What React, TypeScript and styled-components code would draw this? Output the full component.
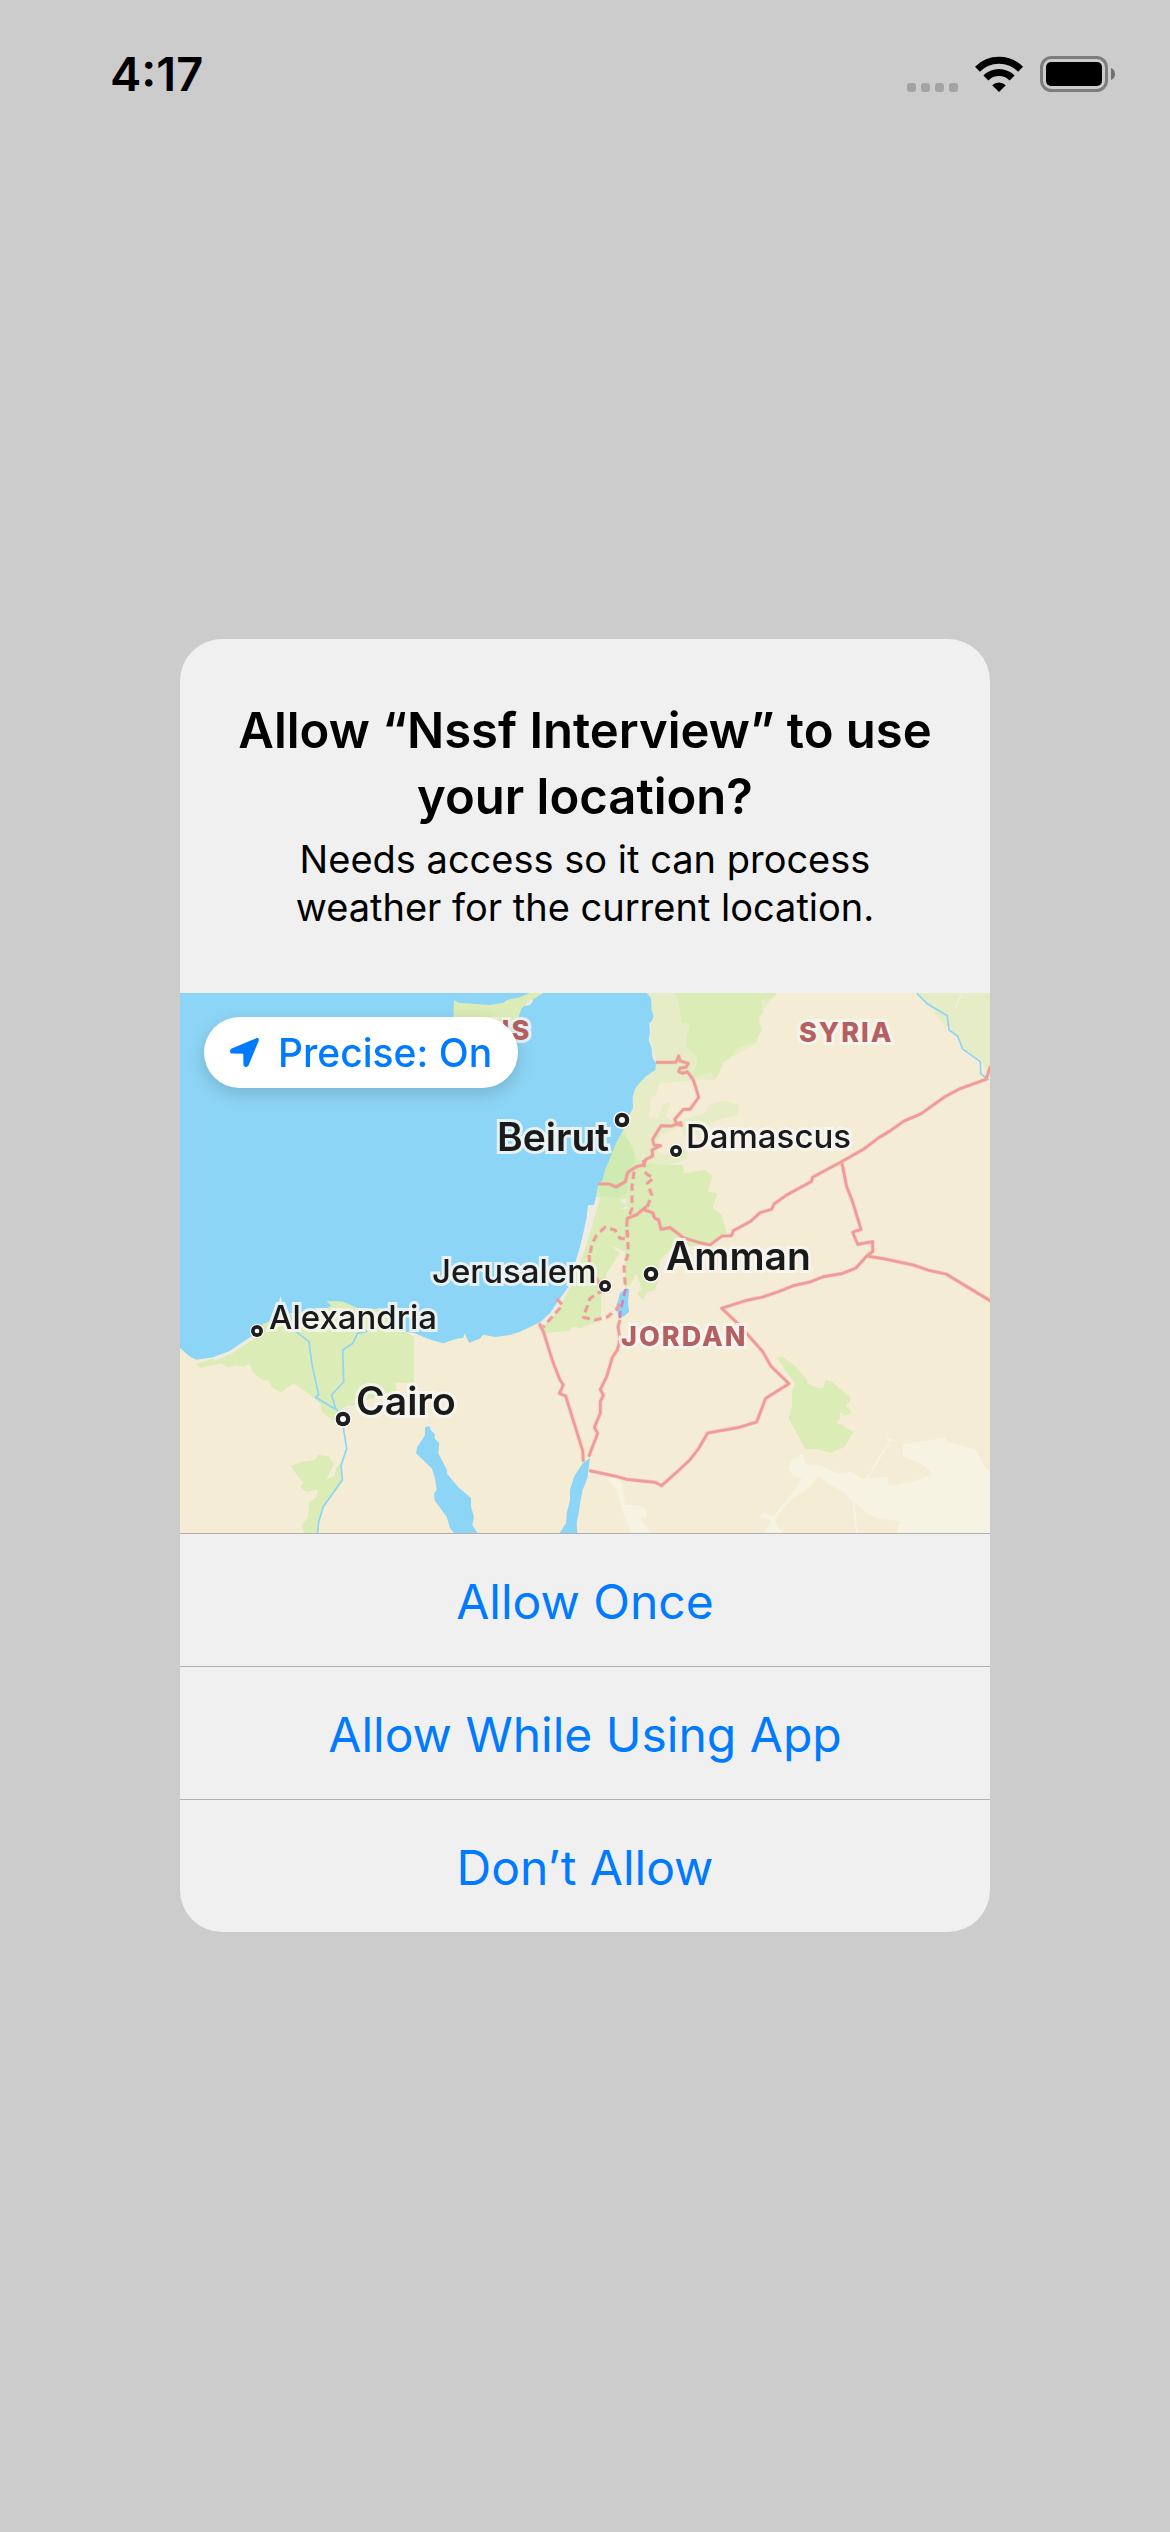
import React from "react";
import styled, { createGlobalStyle } from "styled-components";

const GlobalStyle = createGlobalStyle`
  *, *::before, *::after { box-sizing: border-box; }
  body {
    margin: 0;
    background: #cccccc;
    font-family: Inter, "Liberation Sans", sans-serif;
    color: #000000;
  }
`;

const Screen = styled.div`
  display: flex;
  flex-direction: column;
  min-height: 100vh;
  padding-bottom: 102px;
  background: #cccccc;
`;

const StatusBar = styled.header`
  display: flex;
  align-items: center;
  justify-content: space-between;
  height: 141px;
  padding: 6px 55px 0 110px;
`;

const Clock = styled.time`
  font-size: 47px;
  font-weight: 600;
  line-height: 54px;
`;

const StatusIcons = styled.div`
  display: flex;
  align-items: flex-end;
  gap: 17px;
`;

const Content = styled.main`
  display: flex;
  flex: 1;
  align-items: center;
  justify-content: center;
`;

const Dialog = styled.section`
  width: 100%;
  max-width: 810px;
  overflow: hidden;
  border-radius: 42px;
  background: #f0f0f0;
`;

const Heading = styled.div`
  padding: 59px 48px 62px;
  text-align: center;
`;

const Title = styled.h1`
  margin: 0 0 5px;
  font-size: 49px;
  font-weight: 600;
  line-height: 66px;
`;

const Message = styled.p`
  max-width: 640px;
  margin: 0 auto;
  font-size: 38px;
  line-height: 48px;
`;

const MapFrame = styled.div`
  position: relative;
  aspect-ratio: 3 / 2;
  overflow: hidden;
  background: #f5ecd5;
`;

const MapArt = styled.svg`
  display: block;
  width: 100%;
  height: 100%;
`;

const Label = styled.span<{ $x: number; $y: number }>`
  position: absolute;
  left: ${(p) => (p.$x / 810) * 100}%;
  top: ${(p) => (p.$y / 540) * 100}%;
  line-height: 40px;
  white-space: nowrap;
  color: #1a1a1a;
  paint-order: stroke fill;
  -webkit-text-stroke: 6px rgba(246, 246, 242, 0.85);
`;

const Capital = styled(Label)`
  font-size: 39px;
  font-weight: 600;
`;

const City = styled(Label)`
  font-size: 33px;
  font-weight: 500;
`;

const Country = styled(Label)`
  font-size: 27px;
  font-weight: 800;
  letter-spacing: 2px;
  color: #b56060;
`;

const PreciseButton = styled.button`
  position: absolute;
  top: 24px;
  left: 24px;
  display: flex;
  align-items: center;
  gap: 19px;
  height: 71px;
  padding: 0 26px;
  border: 0;
  border-radius: 36px;
  background: #ffffff;
  box-shadow: 0 6px 18px rgba(0, 0, 0, 0.16);
  color: #007aff;
  font: 500 39px/48px Inter, "Liberation Sans", sans-serif;
  white-space: nowrap;
`;

const Actions = styled.div`
  display: flex;
  flex-direction: column;
`;

const Action = styled.button`
  height: 133px;
  padding: 4px 0 0;
  border: 0;
  border-top: 1px solid #b0b0b0;
  background: transparent;
  color: #007aff;
  font: 400 48px/66px Inter, "Liberation Sans", sans-serif;
`;

const SEA = "#8dd5f6";
const SAND = "#f5ecd5";
const GREEN = "#dbecb6";
const PALE_GREEN = "#e6ecc5";
const BEACH = "#efebe3";
const DESERT = "#f6f3e3";
const BORDER = "#f09a9a";

const markers = [
  { x: 442, y: 127, big: true },
  { x: 496, y: 158, big: false },
  { x: 471, y: 281, big: true },
  { x: 425, y: 293, big: false },
  { x: 77, y: 338, big: false },
  { x: 163, y: 426, big: true },
];

function Terrain() {
  return (
    <MapArt viewBox="0 0 2430 1620" preserveAspectRatio="none" aria-hidden="true">
      <rect width="2430" height="1620" fill={SAND} />
      {/* Levant */}
      <g transform="translate(1200 -39)">
        <polygon fill={PALE_GREEN} points="190,30 600,30 545,90 530,190 440,240 400,300 340,300 300,305 240,310 228,345 214,352 205,412 235,415 247,375 268,365 270,378 255,410 290,425 375,400 385,375 430,362 477,375 475,405 410,420 320,480 320,540 240,560 100,610 0,600 0,300" />
        <polygon fill={SAND} points="245,462 300,440 325,500 300,515 245,525 225,500" />
        <polygon fill={GREEN} points="280,30 592,30 585,50 545,60 549,98 533,115 546,150 525,188 475,202 445,238 425,245 420,275 402,300 395,275 355,290 325,300 345,270 353,235 320,200 318,185 330,130 305,128 298,70" />
        <polygon fill={PALE_GREEN} points="1010,30 1230,30 1230,300 1205,240 1150,205 1110,140 1090,135" />
        <polyline fill="none" stroke="#f1efe2" strokeWidth="3" points="1145,39 1126,85" />
      </g>
      <polygon fill={GREEN} points="1330,411 1362,471 1370,501 1440,516 1510,516 1512,541 1575,531 1598,551 1582,596 1612,601 1598,646 1625,666 1640,721 1590,756 1480,761 1440,801 1435,861 1425,891 1402,896 1388,921 1372,901 1385,891 1370,841 1350,876 1335,886 1334,776 1290,755 1320,781 1280,841 1265,901 1263,971 1240,991 1200,1006 1180,1001 1165,1014 1090,1021 1075,1005 1105,976 1155,891 1190,801 1210,731 1240,611 1260,561 1300,451" />
      <polygon fill="#cfebb1" points="1320,411 1345,441 1362,481 1364,506 1350,533 1340,600 1310,615 1262,610 1250,574 1270,521 1295,461" />
      <polygon fill={BEACH} points="1318,620 1340,616 1340,642 1368,646 1318,648 1342,640" />
      <polygon fill={BEACH} points="1435,861 1452,800 1475,781 1460,820" />
      {/* Nile delta and valley */}
      <g transform="translate(-30 801)">
        <polygon fill={GREEN} points="75,312 150,290 200,265 245,235 275,190 360,165 480,110 560,110 640,150 690,205 732,232 732,368 675,368 680,392 650,400 565,430 540,440 510,460 500,490 455,455 450,430 410,397 370,370 335,397 305,382 298,362 275,360 250,338 238,312 220,321 195,316 175,323 155,310 90,323" />
        <polygon fill={BEACH} points="505,452 540,434 552,445 520,470" />
        <polygon fill={BEACH} points="776,500 780,460 786,508" />
        <polygon fill={GREEN} points="360,618 405,603 435,600 445,584 475,588 492,612 468,660 495,645 498,625 512,610 517,660 460,740 446,785 443,820 402,820 396,795 414,770 417,727 440,710 443,688 410,697 390,680 400,670" />
      </g>
      {/* Eastern desert */}
      <g transform="translate(1200 801)">
        <polygon fill={GREEN} points="590,293 608,291 645,317 680,357 682,371 715,384 730,383 736,359 755,365 810,410 810,424 797,437 817,458 793,466 778,455 782,472 769,488 790,497 820,516 793,562 750,579 715,567 676,567 626,475 636,435 636,395 645,371" />
        <polygon fill={DESERT} points="626,625 635,600 668,582 677,611 720,616 770,640 815,636 850,659 866,648 890,600 928,545 917,528 970,552 1095,533 1105,546 1188,570 1218,625 1230,635 1230,820 950,820 960,784 895,776 860,760 825,728 833,820 828,820 817,722 790,695 750,675 715,648 685,685 630,722 585,775 592,800 610,820 552,820 575,780 541,772 548,757 580,770 625,715 655,675 665,655 640,648" />
        <polygon fill={SAND} points="866,655 922,650 925,678 1000,665 1057,643 1035,617 969,588 969,553 935,540 910,580" />
        <polygon fill={DESERT} points="80,655 115,655 128,675 135,735 170,735 198,748 200,768 180,778 215,820 155,820 130,760 110,690" />
      </g>
      {/* Coast */}
      <polyline fill="none" stroke={BEACH} strokeWidth="22" points="1250,611 1230,680 1205,765 1185,815 1160,880 1125,945 1076,1000" />
      <polyline fill="none" stroke={BEACH} strokeWidth="26" points="100,1091 150,1070 190,1042 230,1018" />
      <polyline fill="none" stroke={BEACH} strokeWidth="8" points="1415,80 1408,91 1410,116 1406,141 1414,161 1426,205" />
      <polygon fill={SEA} points="0,0 1400,0 1413,16 1415,51 1421,69 1416,83 1408,91 1410,116 1406,141 1414,161 1418,196 1428,211 1426,231 1396,251 1380,269 1366,286 1358,311 1359,346 1350,361 1330,411 1308,451 1292,491 1275,531 1268,561 1255,574 1248,611 1242,636 1224,637 1220,671 1212,711 1200,761 1185,811 1165,881 1130,931 1110,961 1080,988 1020,1016 990,1026 945,1032 910,1025 900,1037 867,1049 854,1021 850,1034 830,1037 790,1051 755,1041 740,1036 702,1019 650,1014 640,975 600,945 545,955 510,941 480,926 440,924 455,940 430,965 330,960 300,975 248,993 220,1026 190,1046 150,1073 100,1093 50,1100 30,1091 0,1065" />
      <polygon fill={GREEN} points="330,965 420,950 460,938 455,925 490,926 540,948 600,950 625,985 640,1012 450,1014 330,1014" />
      {/* Cyprus */}
      <g transform="translate(-30 -39)">
        <polygon fill={GREEN} points="852,60 865,68 960,75 1000,68 1012,60 1050,52 1085,36 1126,36 1100,52 1078,65 1055,85 1045,112 1000,150 860,150 850,110" />
        <polygon fill={BEACH} points="1068,72 1084,58 1090,62 1080,75 1064,78" />
      </g>
      {/* Inland water */}
      <g transform="translate(-30 801)" fill="none" stroke={SEA} strokeWidth="5">
        <polyline points="518,490 530,565 513,617 517,660 460,740 446,785 443,820" />
        <polyline points="355,155 378,215 417,245 427,320 446,404 437,412 505,453" />
        <polyline points="600,212 563,220 548,250 518,270 521,366 485,404 497,448" />
        <polygon fill={SEA} stroke="none" points="765,502 778,498 782,510 795,523 793,535 808,550 805,580 830,628 832,642 865,682 903,714 903,740 912,770 907,795 923,820 853,820 840,805 830,770 793,720 793,700 800,690 795,655 785,625 738,580 742,560 765,525" />
        <polygon fill={SEA} stroke="none" points="1260,594 1252,655 1238,690 1232,720 1225,765 1220,790 1222,820 1168,820 1188,790 1190,760 1200,720 1200,690 1212,650 1238,610" />
      </g>
      <polyline fill="none" stroke={SEA} strokeWidth="5" points="2210,0 2240,31 2302,68 2307,111 2333,129 2348,168 2401,206 2402,241 2425,261" />
      <polygon fill={SEA} points="1338,886 1348,889 1344,926 1347,956 1332,970 1315,974 1310,936 1320,901" />
      <Borders />
      {markers.map((m) => (
        <g key={`${m.x}-${m.y}`}>
          <circle cx={m.x * 3} cy={m.y * 3} r={m.big ? 26 : 21} fill="#ffffff" />
          <circle cx={m.x * 3} cy={m.y * 3} r={m.big ? 22 : 18} fill="#1f1f1f" />
          <circle cx={m.x * 3} cy={m.y * 3} r={m.big ? 9 : 7} fill="#ffffff" />
        </g>
      ))}
    </MapArt>
  );
}

function BorderLines() {
  return (
    <>
      <g transform="translate(1200 -39)">
        <polyline points="228,247 288,247 296,228 300,243 325,250 318,262 300,264 296,275 308,280 322,275 340,300 348,325 356,352 330,388 310,388 284,418 290,432 304,436 302,428 275,438 243,437 218,478 222,495 242,497 216,510 218,528 198,538 190,555 170,560 150,572 143,578 136,605 108,621 88,612 55,612" />
        <polyline points="140,740 142,715 170,704 198,680 193,690 218,698 224,714 236,720 243,748 270,743 310,773 355,787 390,795 426,768 455,767 460,752 512,724 540,698 575,688 582,672 620,645 695,604 697,592 785,545 850,508 895,474 930,453 972,423 1022,402 1095,350 1140,326 1218,298 1232,258" />
        <polyline points="786,550 800,620 817,663 843,748 818,757 833,793 878,785 878,815 860,828" />
      </g>
      <g transform="translate(1200 801)">
        <polyline points="1232,123 1098,42 1050,32 1000,15 910,-4 860,-12 828,24 785,41 730,50 690,66 640,77 595,95 548,111 500,121 425,145 475,192 548,275 573,319 627,371 557,415 530,486 478,502 383,519 355,567 330,599 295,632 244,677 226,667 140,658 112,650 28,632" />
        <polyline points="120,180 114,200 120,238 112,270 97,292 80,350 61,388 70,406 61,424 61,460 43,502 53,520 26,590" />
      </g>
      <g transform="translate(-30 801)">
        <polyline points="1108,190 1120,215 1150,310 1170,360 1180,375 1168,400 1187,408 1200,450 1238,572 1240,605" />
      </g>
      <g strokeDasharray="22 14">
        <g transform="translate(1140 381)">
          <polyline points="222,155 216,200 216,265 205,295" />
          <polyline points="250,120 258,160 280,175 262,190 275,225 262,260" />
          <polyline points="200,330 203,357 180,355 165,330 135,322 110,345 96,372 88,410" />
        </g>
        <g transform="translate(1080 711)">
          <polyline points="262,0 265,70 252,110 256,170" />
          <polyline points="147,75 150,110 175,155 185,183 150,205 130,262 165,270 200,262 228,240 240,220" />
        </g>
        <polyline points="1130,918 1148,936 1090,1002" />
      </g>
    </>
  );
}

function Borders() {
  return (
    <g fill="none" strokeLinejoin="round">
      <g stroke={BORDER} strokeWidth="12" opacity="0.35">
        <BorderLines />
      </g>
      <g stroke={BORDER} strokeWidth="8">
        <BorderLines />
      </g>
      <polyline stroke="#cf86b4" strokeWidth="8" strokeDasharray="22 12" points="1337,888 1328,925 1320,962 1320,980" />
    </g>
  );
}

function CellularIcon() {
  return (
    <svg width="51" height="9" viewBox="0 0 51 9" fill="#a3a3a3" aria-hidden="true">
      <rect width="9" height="9" rx="3" />
      <rect x="14" width="9" height="9" rx="3" />
      <rect x="28" width="9" height="9" rx="3" />
      <rect x="42" width="9" height="9" rx="3" />
    </svg>
  );
}

function WifiIcon() {
  return (
    <svg width="48" height="36" viewBox="0 0 48 36" aria-hidden="true">
      <g fill="none" stroke="#000000" strokeWidth="7">
        <path d="M2.4 13.2 A30.5 30.5 0 0 1 45.6 13.2" />
        <path d="M10.9 22 A18.4 18.4 0 0 1 37.1 22" />
      </g>
      <path d="M24 36 L17.2 29.2 A9.8 9.8 0 0 1 30.8 29.2 Z" />
    </svg>
  );
}

function BatteryIcon() {
  return (
    <svg width="75" height="36" viewBox="0 0 75 36" aria-hidden="true">
      <rect x="1.5" y="1.5" width="65" height="33" rx="10" fill="none" stroke="#7d7d7d" strokeWidth="3" />
      <rect x="6" y="6" width="56" height="24" rx="5" />
      <path d="M71 12 A6.5 6.5 0 0 1 71 24 Z" fill="#707070" />
    </svg>
  );
}

function ArrowIcon() {
  return (
    <svg width="29" height="29" viewBox="0 0 29 29" fill="currentColor" aria-hidden="true">
      <path d="M26.2 0.3 C28.2 -0.4 29.4 0.8 28.7 2.8 L18.6 27.2 C17.5 29.8 13.4 29.5 13.4 26.6 L13.3 16.2 Q13.3 15.7 12.8 15.7 L2.4 15.6 C-0.5 15.6 -0.8 11.5 1.8 10.4 Z" />
    </svg>
  );
}

const actions = ["Allow Once", "Allow While Using App", "Don’t Allow"];

export default function App() {
  return (
    <>
      <GlobalStyle />
      <Screen>
        <StatusBar>
          <Clock>4:17</Clock>
          <StatusIcons>
            <CellularIcon />
            <WifiIcon />
            <BatteryIcon />
          </StatusIcons>
        </StatusBar>
        <Content>
          <Dialog role="alertdialog" aria-labelledby="prompt-title" aria-describedby="prompt-message">
            <Heading>
              <Title id="prompt-title">Allow “Nssf Interview” to use your location?</Title>
              <Message id="prompt-message">
                Needs access so it can process weather for the current location.
              </Message>
            </Heading>
            <MapFrame>
              <Terrain />
              <Country $x={226} $y={18}>CYPRUS</Country>
              <Country $x={619} $y={20}>SYRIA</Country>
              <Country $x={441} $y={324}>JORDAN</Country>
              <Capital $x={317} $y={124}>Beirut</Capital>
              <Capital $x={486} $y={243}>Amman</Capital>
              <Capital $x={176} $y={388}>Cairo</Capital>
              <City $x={506} $y={123}>Damascus</City>
              <City $x={252} $y={258}>Jerusalem</City>
              <City $x={89} $y={304}>Alexandria</City>
              <PreciseButton type="button">
                <ArrowIcon />
                Precise: On
              </PreciseButton>
            </MapFrame>
            <Actions>
              {actions.map((label) => (
                <Action type="button" key={label}>
                  {label}
                </Action>
              ))}
            </Actions>
          </Dialog>
        </Content>
      </Screen>
    </>
  );
}
